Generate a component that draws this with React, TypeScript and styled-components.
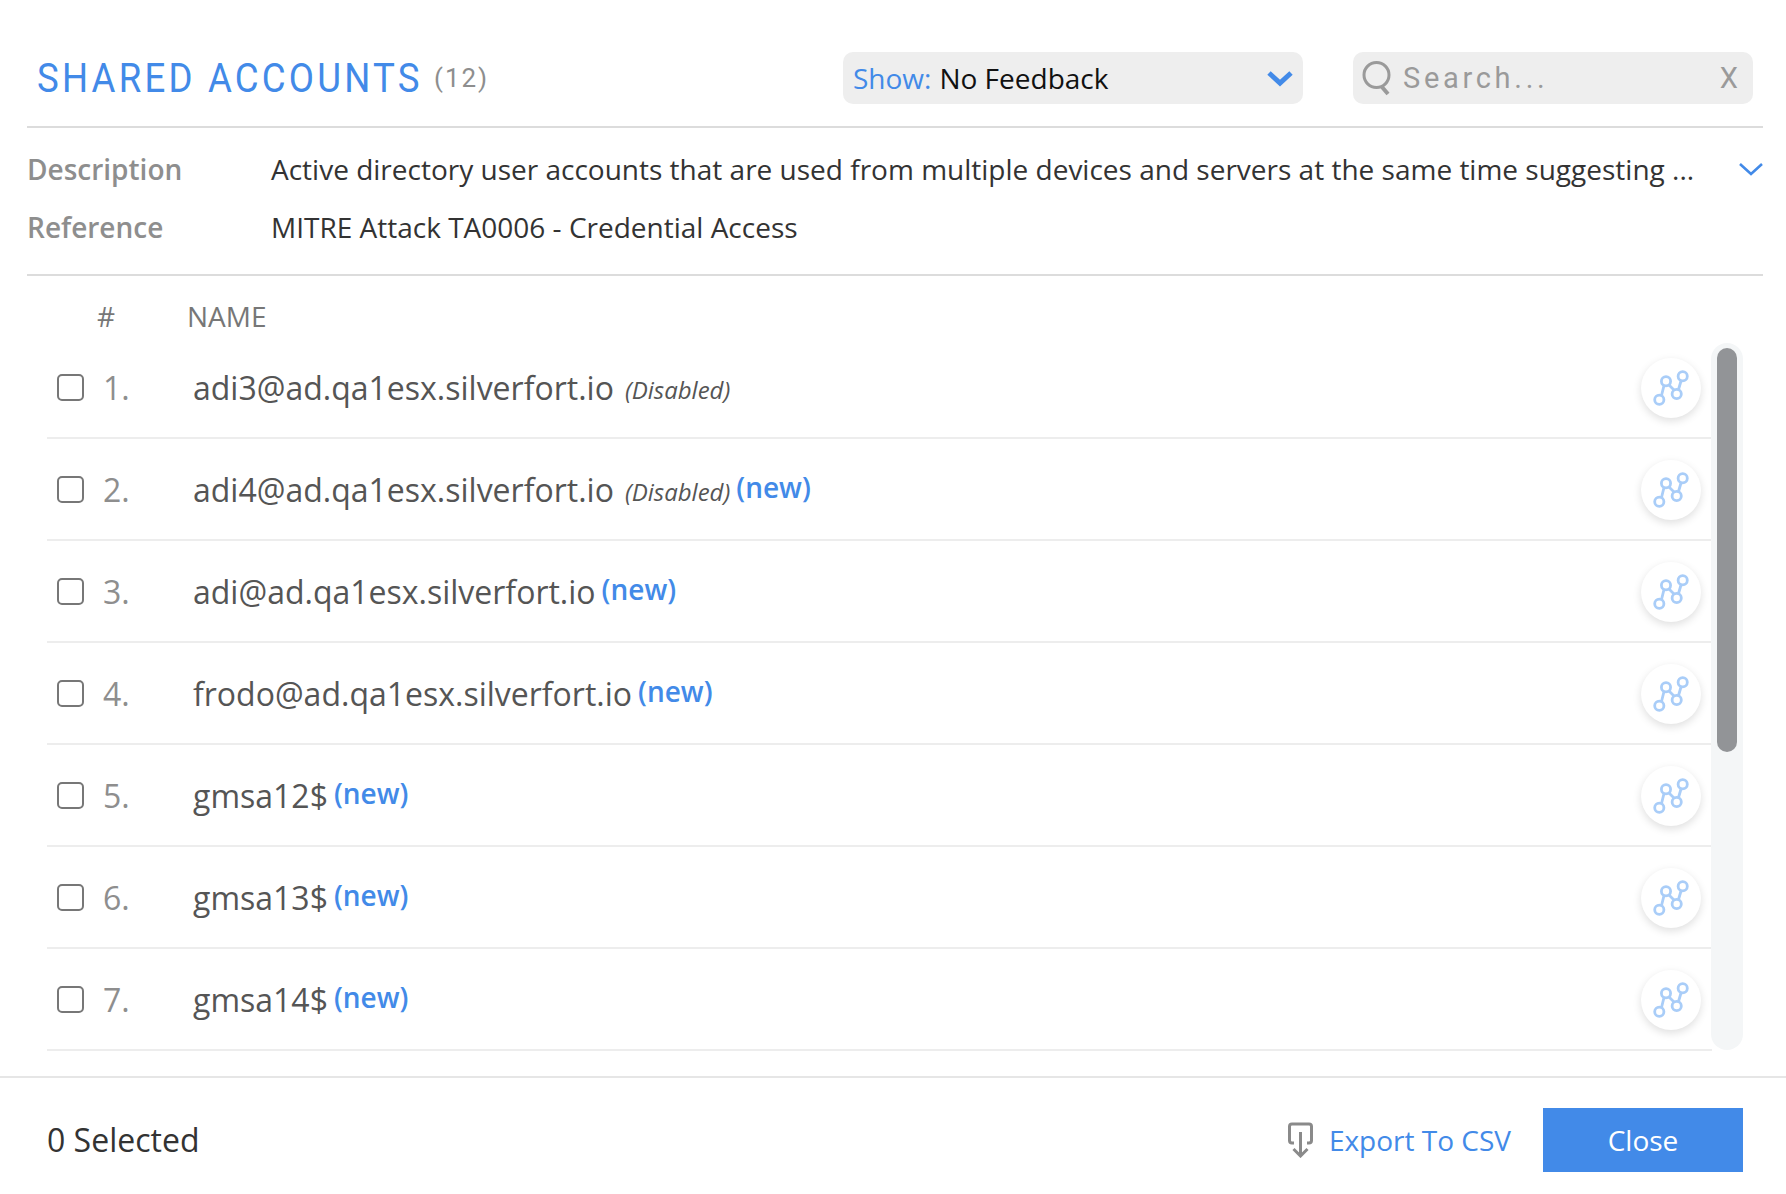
import React from "react";
import styled, { createGlobalStyle } from "styled-components";

const GlobalStyle = createGlobalStyle`
  html, body {
    margin: 0;
    padding: 0;
    background: #fff;
  }
  * {
    box-sizing: border-box;
  }
`;

const BLUE = "#428ae8";

const Page = styled.div`
  width: 1786px;
  height: 1194px;
  overflow: hidden;
  background: #fff;
  display: flex;
  flex-direction: column;
  font-family: "Open Sans", "Noto Sans", sans-serif;
`;

const Header = styled.header`
  height: 128px;
  margin: 0 23px 0 27px;
  padding-top: 52px;
  border-bottom: 2px solid #dcdcdc;
  display: flex;
  align-items: flex-start;
`;

const TitleBlock = styled.div`
  width: 816px;
  height: 52px;
  padding-left: 10px;
  display: flex;
  align-items: center;
  gap: 12px;
`;

const Title = styled.h1`
  width: 385px;
  margin: 0;
  font-family: "Roboto", sans-serif;
  font-weight: 400;
  font-size: 40px;
  letter-spacing: 3.5px;
  color: ${BLUE};
  white-space: nowrap;
  transform: scaleX(0.915);
  transform-origin: left center;
`;

const Count = styled.span`
  font-size: 26px;
  letter-spacing: 2px;
  color: #8e8e8e;
  font-family: "Roboto", sans-serif;
`;

const ShowSelect = styled.div`
  width: 460px;
  height: 52px;
  border-radius: 10px;
  background: #eeeeee;
  padding: 0 9px 0 10px;
  display: flex;
  align-items: center;
  justify-content: space-between;
  font-size: 28px;
`;

const ShowLabel = styled.span`
  color: ${BLUE};
  margin-right: 8px;
`;

const ShowValue = styled.span`
  color: #111;
`;

const SearchBox = styled.div`
  width: 400px;
  height: 52px;
  margin-left: 50px;
  border-radius: 10px;
  background: #eeeeee;
  padding: 0 15px 0 9px;
  display: flex;
  align-items: center;
  color: #9a9a9a;
`;

const SearchText = styled.span`
  flex: 1;
  margin-left: 11px;
  font-size: 29px;
  letter-spacing: 3.7px;
  font-family: "Roboto", sans-serif;
`;

const ClearMark = styled.span`
  font-size: 29px;
  margin-bottom: 1px;
  font-family: "Roboto", sans-serif;
`;

const Details = styled.section`
  height: 148px;
  margin: 0 23px 0 27px;
  padding-top: 12px;
  border-bottom: 2px solid #dcdcdc;
`;

const DetailRow = styled.div`
  height: 58px;
  display: flex;
  align-items: center;
  font-size: 28px;
`;

const DetailLabel = styled.span`
  width: 244px;
  color: #8e8e8e;
  font-weight: 600;
`;

const DetailValue = styled.span`
  flex: 1;
  color: #333;
  white-space: nowrap;
`;

const ColumnHeads = styled.div`
  height: 61px;
  padding-top: 18px;
  display: flex;
  align-items: center;
  font-size: 28px;
  color: #777;
`;

const HashHead = styled.span`
  width: 187px;
  padding-left: 97px;
`;

const ListArea = styled.div`
  height: 713px;
  margin-left: 47px;
  display: flex;
  align-items: stretch;
`;

const Rows = styled.div`
  width: 1665px;
`;

const Row = styled.div`
  height: 102px;
  border-bottom: 2px solid #ededed;
  display: flex;
  align-items: center;
`;

const Check = styled.span`
  width: 27px;
  height: 27px;
  margin-left: 10px;
  border: 2px solid #777;
  border-radius: 5px;
  background: #fff;
  flex: none;
`;

const RowNumber = styled.span`
  width: 109px;
  padding-left: 19px;
  font-size: 32px;
  color: #8e8e8e;
  flex: none;
`;

const Name = styled.span`
  font-size: 32px;
  color: #555;
  white-space: nowrap;
`;

const Disabled = styled.span`
  margin-left: 11px;
  font-size: 24px;
  font-style: italic;
  color: #555;
  position: relative;
  top: 2px;
`;

const NewTag = styled.span`
  margin-left: 6px;
  font-size: 28px;
  font-weight: 600;
  color: ${BLUE};
  position: relative;
  top: -2px;
`;

const GraphButton = styled.button`
  width: 60px;
  height: 60px;
  margin: 2px 11px 0 auto;
  padding: 0;
  border: none;
  border-radius: 50%;
  background: #fff;
  box-shadow: 0 3px 9px rgba(0, 0, 0, 0.13);
  display: flex;
  flex: none;
`;

const Track = styled.div`
  width: 32px;
  margin: 6px 0 0 -1px;
  padding: 5px 6px 0;
  border-radius: 16px;
  background: #f4f6f7;
  position: relative;
  z-index: 1;
`;

const Thumb = styled.div`
  height: 404px;
  border-radius: 10px;
  background: #929497;
`;

const Footer = styled.footer`
  height: 118px;
  margin-top: 26px;
  border-top: 2px solid #e6e6e6;
  padding: 30px 43px 0 47px;
  display: flex;
  align-items: flex-start;
`;

const SelectedCount = styled.span`
  flex: 1;
  height: 64px;
  line-height: 64px;
  font-size: 32px;
  color: #333;
`;

const ExportLink = styled.a`
  height: 64px;
  margin-right: 32px;
  display: flex;
  align-items: center;
  gap: 15px;
  font-size: 28px;
  color: ${BLUE};
`;

const CloseButton = styled.button`
  width: 200px;
  height: 64px;
  border: none;
  background: ${BLUE};
  color: #fff;
  font-family: inherit;
  font-size: 28px;
`;

const Chevron = ({ bold }: { bold?: boolean }) =>
  bold ? (
    <svg width="28" height="18" viewBox="0 0 28 18" fill="none">
      <path d="M3 4 L14 14 L25 4" stroke={BLUE} strokeWidth="5" />
    </svg>
  ) : (
    <svg width="24" height="14" viewBox="0 0 24 14" fill="none">
      <path d="M1 2 L12 12 L23 2" stroke={BLUE} strokeWidth="2.6" />
    </svg>
  );

const SearchIcon = () => (
  <svg width="30" height="36" viewBox="0 0 30 36" fill="none" stroke="#9a9a9a">
    <circle cx="14.5" cy="15" r="12.5" strokeWidth="3" />
    <path d="M20 27 L26 34" strokeWidth="4" />
  </svg>
);

const GraphIcon = () => (
  <svg width="60" height="60" viewBox="0 0 60 60" fill="none" stroke="#a9cdf8" strokeWidth="2.8">
    <path d="M20.5 37.5 L23 27.5 M28 27 L33 32 M37.5 31.5 L40 23" />
    <circle cx="18.3" cy="41.7" r="4.6" />
    <circle cx="25" cy="23.3" r="4.6" />
    <circle cx="35.7" cy="36" r="4.6" />
    <circle cx="41.7" cy="18.3" r="4.6" />
  </svg>
);

const ExportIcon = () => (
  <svg width="27" height="36" viewBox="0 0 27 36" fill="none" stroke="#8a8a8a">
    <path d="M7 21 H5 Q2.5 21 2.5 18.5 V4.5 Q2.5 2 5 2 H22 Q24.5 2 24.5 4.5 V18.5 Q24.5 21 22 21 H20" strokeWidth="3" />
    <path d="M13.5 10 V32" strokeWidth="3" />
    <path d="M6.5 27 L13.5 34 L20.5 27" strokeWidth="3" />
  </svg>
);

type Account = {
  name: string;
  disabled?: boolean;
  isNew?: boolean;
};

const accounts: Account[] = [
  { name: "adi3@ad.qa1esx.silverfort.io", disabled: true },
  { name: "adi4@ad.qa1esx.silverfort.io", disabled: true, isNew: true },
  { name: "adi@ad.qa1esx.silverfort.io", isNew: true },
  { name: "frodo@ad.qa1esx.silverfort.io", isNew: true },
  { name: "gmsa12$", isNew: true },
  { name: "gmsa13$", isNew: true },
  { name: "gmsa14$", isNew: true },
];

export default function App() {
  return (
    <Page>
      <GlobalStyle />
      <Header>
        <TitleBlock>
          <Title>SHARED ACCOUNTS</Title>
          <Count>(12)</Count>
        </TitleBlock>
        <ShowSelect>
          <span>
            <ShowLabel>Show:</ShowLabel>
            <ShowValue>No Feedback</ShowValue>
          </span>
          <Chevron bold />
        </ShowSelect>
        <SearchBox>
          <SearchIcon />
          <SearchText>Search...</SearchText>
          <ClearMark>X</ClearMark>
        </SearchBox>
      </Header>
      <Details>
        <DetailRow>
          <DetailLabel>Description</DetailLabel>
          <DetailValue>
            Active directory user accounts that are used from multiple devices and servers at the same time suggesting ...
          </DetailValue>
          <Chevron />
        </DetailRow>
        <DetailRow>
          <DetailLabel>Reference</DetailLabel>
          <DetailValue>MITRE Attack TA0006 - Credential Access</DetailValue>
        </DetailRow>
      </Details>
      <ColumnHeads>
        <HashHead>#</HashHead>
        <span>NAME</span>
      </ColumnHeads>
      <ListArea>
        <Rows>
          {accounts.map((account, index) => (
            <Row key={account.name}>
              <Check />
              <RowNumber>{index + 1}.</RowNumber>
              <Name>{account.name}</Name>
              {account.disabled && <Disabled>(Disabled)</Disabled>}
              {account.isNew && <NewTag>(new)</NewTag>}
              <GraphButton>
                <GraphIcon />
              </GraphButton>
            </Row>
          ))}
        </Rows>
        <Track>
          <Thumb />
        </Track>
      </ListArea>
      <Footer>
        <SelectedCount>0 Selected</SelectedCount>
        <ExportLink>
          <ExportIcon />
          Export To CSV
        </ExportLink>
        <CloseButton>Close</CloseButton>
      </Footer>
    </Page>
  );
}
